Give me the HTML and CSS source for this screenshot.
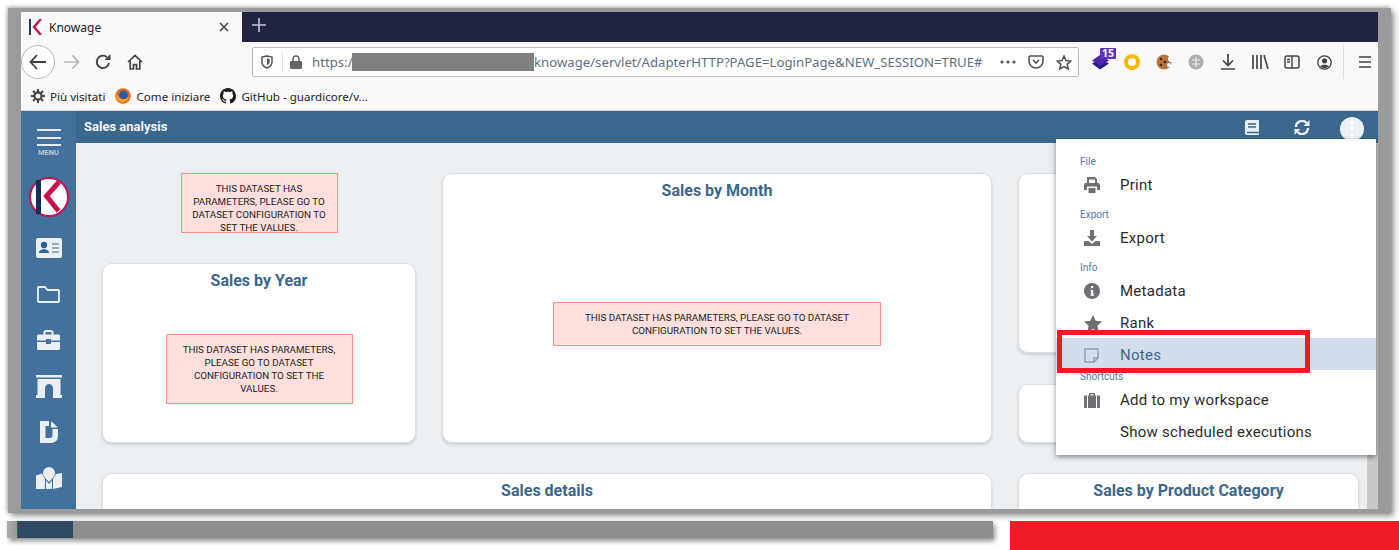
FILE: index.html
```html
<!DOCTYPE html>
<html lang="en">
<head>
  <meta charset="UTF-8" />
  <title>Knowage</title>
  <link rel="stylesheet" href="styles.css">
</head>
<body>
  <div class="frame">
    <div class="window">
      <div class="tabbar">
        <div class="tab">
          <svg class="favicon" width="13" height="16" viewBox="0 0 13 16"><rect x="0" y="0" width="2" height="16" fill="#1c3d63"/><path d="M12 0 L5 8 L12 16" fill="none" stroke="#c8104f" stroke-width="2.4"/></svg>
          <span class="tab-title">Knowage</span>
          <svg class="tab-close" width="10" height="10" viewBox="0 0 10 10"><path d="M1 1 L9 9 M9 1 L1 9" stroke="#444" stroke-width="1.5"/></svg>
        </div>
        <svg class="tab-new" width="14" height="14" viewBox="0 0 14 14"><path d="M7 0 V14 M0 7 H14" stroke="#c4c6d2" stroke-width="1.6"/></svg>
      </div>

      <div class="navbar">
        <div class="back">
          <svg width="18" height="16" viewBox="0 0 18 16"><path d="M8 1 L1.5 8 L8 15 M2 8 H17" fill="none" stroke="#3c3c3c" stroke-width="1.8"/></svg>
        </div>
        <div class="nav-btn">
          <svg width="17" height="16" viewBox="0 0 18 16"><path d="M10 1 L16.5 8 L10 15 M16 8 H1" fill="none" stroke="#b8b8b8" stroke-width="1.8"/></svg>
        </div>
        <div class="nav-btn">
          <svg width="16" height="16" viewBox="0 0 16 16"><path d="M14 9 A6.2 6.2 0 1 1 12 3.2" fill="none" stroke="#444" stroke-width="1.9"/><path d="M9.5 6 H15.5 V0 Z" fill="#444"/></svg>
        </div>
        <div class="nav-btn">
          <svg width="16" height="16" viewBox="0 0 16 16"><path d="M1 8 L8 1.5 L15 8 M3.2 7 V15 H6.5 V10.5 H9.5 V15 H12.8 V7" fill="none" stroke="#444" stroke-width="1.7"/></svg>
        </div>

        <div class="urlbar">
          <svg class="url-shield" width="12" height="14" viewBox="0 0 12 14"><path d="M1 2 L6 1 L11 2 V7 C11 10 8.5 12 6 13 C3.5 12 1 10 1 7 Z" fill="none" stroke="#555" stroke-width="1.5"/><path d="M6 3.5 L8.7 4 V7 C8.7 8.5 7.3 9.7 6 10.3 Z" fill="#555"/></svg>
          <span class="url-sep"></span>
          <svg class="url-lock" width="12" height="14" viewBox="0 0 12 14"><path d="M3 6 V4 A3 3 0 0 1 9 4 V6" fill="none" stroke="#666" stroke-width="1.6"/><rect x="0" y="6" width="12" height="8" rx="1.2" fill="#666"/></svg>
          <span class="url-text url-scheme">https:/</span>
          <span class="url-mask"></span>
          <span class="url-text url-path">knowage/servlet/AdapterHTTP?PAGE=LoginPage&amp;NEW_SESSION=TRUE#</span>
          <svg class="url-dots" width="16" height="4" viewBox="0 0 16 4"><circle cx="2" cy="2" r="1.6" fill="#555"/><circle cx="8" cy="2" r="1.6" fill="#555"/><circle cx="14" cy="2" r="1.6" fill="#555"/></svg>
          <svg class="url-pocket" width="16" height="14" viewBox="0 0 16 14"><path d="M2 1 H14 A1 1 0 0 1 15 2 V6 A7 7 0 0 1 1 6 V2 A1 1 0 0 1 2 1 Z" fill="none" stroke="#555" stroke-width="1.6"/><path d="M5 5 L8 8 L11 5" fill="none" stroke="#555" stroke-width="1.6"/></svg>
          <svg class="url-star" width="16" height="15" viewBox="0 0 16 15"><path d="M8 1.2 L10 5.6 L14.8 6.1 L11.2 9.3 L12.2 14 L8 11.6 L3.8 14 L4.8 9.3 L1.2 6.1 L6 5.6 Z" fill="none" stroke="#555" stroke-width="1.6"/></svg>
        </div>

        <div class="ext ext-stack">
          <svg width="17" height="16" viewBox="0 0 17 16"><path d="M0 9.5 L8 5 L17 9.5 L8 15.5 Z" fill="#2c1a86"/><path d="M0 6.5 L8 1 L17 6.5 L8 12 Z" fill="#4a25aa"/></svg>
          <span class="ext-badge">15</span>
        </div>
        <div class="ext"><span class="ring"></span></div>
        <div class="ext">
          <svg width="17" height="16" viewBox="0 0 17 16"><circle cx="8" cy="8" r="7.5" fill="#b8743e"/><circle cx="15" cy="5" r="3" fill="#f9f9fa"/><circle cx="13" cy="11" r="2" fill="#f9f9fa"/><circle cx="5" cy="5" r="1.3" fill="#4a2a18"/><circle cx="9" cy="8" r="1.3" fill="#4a2a18"/><circle cx="5" cy="11" r="1.3" fill="#4a2a18"/></svg>
        </div>
        <div class="ext">
          <svg width="16" height="16" viewBox="0 0 16 16"><circle cx="8" cy="8" r="7.5" fill="#aeaeae"/><path d="M8 3 V13 M4 6 H12 M4 10 H12" stroke="#eee" stroke-width="1.2"/></svg>
        </div>
        <div class="ext">
          <svg width="14" height="16" viewBox="0 0 14 16"><path d="M7 0 V11 M2 6.5 L7 11.5 L12 6.5 M0 15 H14" fill="none" stroke="#444" stroke-width="1.7"/></svg>
        </div>
        <div class="ext">
          <svg width="17" height="14" viewBox="0 0 17 14"><path d="M1 0 V14 M5 0 V14 M9 0 V14 M12 0 L16 14" fill="none" stroke="#444" stroke-width="1.7"/></svg>
        </div>
        <div class="ext">
          <svg width="16" height="14" viewBox="0 0 16 14"><rect x="1" y="1" width="14" height="12" rx="2" fill="none" stroke="#444" stroke-width="1.5"/><path d="M8 1 V13 M3 4.5 H6 M3 7 H6" stroke="#444" stroke-width="1.4"/></svg>
        </div>
        <div class="ext">
          <svg width="15" height="15" viewBox="0 0 15 15"><circle cx="7.5" cy="7.5" r="6.7" fill="none" stroke="#444" stroke-width="1.3"/><circle cx="7.5" cy="5.8" r="2.6" fill="#444"/><path d="M3 11.5 C4 9 11 9 12 11.5 L7.5 13.5 Z" fill="#444"/></svg>
        </div>
        <span class="nav-sep"></span>
        <div class="ext ext-menu">
          <svg width="12" height="12" viewBox="0 0 12 12"><path d="M0 1 H12 M0 6 H12 M0 11 H12" stroke="#444" stroke-width="1.6"/></svg>
        </div>
      </div>

      <div class="bookmarks">
        <span class="bookmark">
          <svg width="14" height="14" viewBox="0 0 14 14"><circle cx="7" cy="7" r="3.6" fill="none" stroke="#444" stroke-width="2.2"/><path d="M7 0 V3 M7 11 V14 M0 7 H3 M11 7 H14 M2 2 L4 4 M10 10 L12 12 M12 2 L10 4 M4 10 L2 12" stroke="#444" stroke-width="2"/></svg>
          Più visitati
        </span>
        <span class="bookmark">
          <svg width="16" height="16" viewBox="0 0 16 16"><circle cx="8" cy="8" r="7.8" fill="#e8642c"/><circle cx="8.5" cy="7" r="4.4" fill="#2c5aa8"/><path d="M1.5 5 C3 11 9 13.5 14.5 9 C13 14 6 16 2.5 12 C1 10 1 7 1.5 5 Z" fill="#f7a81e"/></svg>
          Come iniziare
        </span>
        <span class="bookmark">
          <svg width="16" height="16" viewBox="0 0 16 16"><path fill="#1b1f23" d="M8 0C3.58 0 0 3.58 0 8c0 3.54 2.29 6.53 5.47 7.59.4.07.55-.17.55-.38 0-.19-.01-.82-.01-1.49-2.01.37-2.53-.49-2.69-.94-.09-.23-.48-.94-.82-1.13-.28-.15-.68-.52-.01-.53.63-.01 1.08.58 1.23.82.72 1.21 1.87.87 2.33.66.07-.52.28-.87.51-1.07-1.78-.2-3.64-.89-3.64-3.95 0-.87.31-1.59.82-2.15-.08-.2-.36-1.02.08-2.12 0 0 .67-.21 2.2.82.64-.18 1.32-.27 2-.27s1.36.09 2 .27c1.53-1.04 2.2-.82 2.2-.82.44 1.1.16 1.92.08 2.12.51.56.82 1.27.82 2.15 0 3.07-1.87 3.75-3.65 3.95.29.25.54.73.54 1.48 0 1.07-.01 1.93-.01 2.2 0 .21.15.46.55.38A8.01 8.01 0 0016 8c0-4.42-3.58-8-8-8z"/></svg>
          GitHub - guardicore/v...
        </span>
      </div>

      <div class="app">
        <aside class="sidebar">
          <div class="hamburger">
            <span></span><span></span><span></span>
            <div class="hamburger-label">MENU</div>
          </div>
          <svg class="side-logo" width="40" height="40" viewBox="0 0 40 40">
            <circle cx="20" cy="20" r="19" fill="#fff" stroke="#c8104f" stroke-width="2"/>
            <rect x="7" y="3" width="5" height="34" fill="#12305a"/>
            <path d="M30 5 L17.5 19 L29.5 34" fill="none" stroke="#c8104f" stroke-width="5"/>
          </svg>
          <div class="side-item">
            <svg width="26" height="20" viewBox="0 0 26 20"><rect width="26" height="20" rx="2" fill="#ebeff2"/><circle cx="8" cy="7" r="3.2" fill="#2f628f"/><path d="M3 15 C3 10 13 10 13 15 Z" fill="#2f628f"/><path d="M16 6 H23 M16 10 H23 M16 14 H23" stroke="#6e92b2" stroke-width="1.6"/></svg>
          </div>
          <div class="side-item">
            <svg width="23" height="17" viewBox="0 0 23 17"><path d="M1 15 V2 A1 1 0 0 1 2 1 H8 L10.5 4 H21 A1 1 0 0 1 22 5 V15 A1 1 0 0 1 21 16 H2 A1 1 0 0 1 1 15 Z" fill="none" stroke="#ebeff2" stroke-width="1.8"/></svg>
          </div>
          <div class="side-item">
            <svg width="23" height="20" viewBox="0 0 23 20"><path d="M7.5 5 V2.5 A1.5 1.5 0 0 1 9 1 H14 A1.5 1.5 0 0 1 15.5 2.5 V5" fill="none" stroke="#ebeff2" stroke-width="2"/><path d="M0 6 A1.5 1.5 0 0 1 1.5 4.5 H21.5 A1.5 1.5 0 0 1 23 6 V10.5 H14 V9 H9 V10.5 H0 Z M0 12 H9 V14 H14 V12 H23 V18.5 A1.5 1.5 0 0 1 21.5 20 H1.5 A1.5 1.5 0 0 1 0 18.5 Z" fill="#ebeff2"/></svg>
          </div>
          <div class="side-item">
            <svg width="26" height="23" viewBox="0 0 26 23"><rect width="26" height="2.5" fill="#ebeff2"/><path d="M1.5 4 H24.5 V20 H26 V23 H17 V13.5 A4 4.5 0 0 0 9 13.5 V23 H0 V20 H1.5 Z" fill="#ebeff2"/></svg>
          </div>
          <div class="side-item">
            <svg width="18" height="22" viewBox="0 0 18 22"><path d="M0 0 H9 V5 H5.5 V17 H10 Q12.5 17 12.5 14 V8 H18 V14.5 Q18 22 10.5 22 H0 Z" fill="#ebeff2"/><path d="M11 0 L18 6.5 H11 Z" fill="#ebeff2"/></svg>
          </div>
          <div class="side-item">
            <svg width="26" height="22" viewBox="0 0 26 22"><path d="M13 0 A6 6 0 0 1 19 6 C19 9 15 13 13 15 C11 13 7 9 7 6 A6 6 0 0 1 13 0 Z" fill="#ebeff2"/><path d="M0 8.5 L6 6.5 L9 12 V22 L0 22 Z M17 12 L20 7 L26 6 V20 L17 22 Z M10 13.5 L13 17 L16 13.5 V22 H10 Z" fill="#ebeff2"/></svg>
          </div>
        </aside>

        <div class="main">
          <div class="topbar">
            <span class="topbar-title">Sales analysis</span>
            <div class="topbar-tools">
              <svg class="tool-book" width="14" height="15" viewBox="0 0 14 15"><path d="M2 0 H13 A1 1 0 0 1 14 1 V14 A1 1 0 0 1 13 15 H2 A2 2 0 0 1 0 13 V2 A2 2 0 0 1 2 0 Z" fill="#e8eef3"/><path d="M3 4 H11 M3 7 H11 M2 12.5 H14" stroke="#3b678c" stroke-width="1.3"/></svg>
              <svg class="tool-sync" width="16" height="15" viewBox="0 0 16 15"><path d="M2 7 A6 6 0 0 1 12.5 3" fill="none" stroke="#e8eef3" stroke-width="2.4"/><path d="M15.5 0 V6 H9.5 Z" fill="#e8eef3"/><path d="M14 8 A6 6 0 0 1 3.5 12" fill="none" stroke="#e8eef3" stroke-width="2.4"/><path d="M0.5 15 V9 H6.5 Z" fill="#e8eef3"/></svg>
              <span class="kebab"><i></i><i></i><i></i></span>
            </div>
          </div>

          <div class="content">
            <div class="board">
              <div class="col">
                <div class="alert alert-float">This dataset has parameters, please go to dataset configuration to set the values.</div>
                <section class="card card-year">
                  <h3>Sales by Year</h3>
                  <div class="alert alert-year">This dataset has parameters, please go to dataset configuration to set the values.</div>
                </section>
              </div>
              <div class="col">
                <section class="card card-month">
                  <h3>Sales by Month</h3>
                  <div class="alert alert-month">This dataset has parameters, please go to dataset configuration to set the values.</div>
                </section>
              </div>
              <div class="col">
                <section class="card card-right-a"></section>
                <section class="card card-right-b"></section>
              </div>
              <section class="card card-details"><h3>Sales details</h3></section>
              <section class="card card-category"><h3>Sales by Product Category</h3></section>
            </div>
            <div class="scrollbar"></div>
          </div>

          <div class="menu">
            <div class="menu-label">File</div>
            <div class="menu-item">
              <svg width="16" height="16" viewBox="0 0 16 16"><path fill="#6f6f75" d="M3 0 H11 L13 2 V6 H11 V2.5 H5 V6 H3 Z M1.5 6 H14.5 A1.5 1.5 0 0 1 16 7.5 V13 H13 V9.5 H3 V13 H0 V7.5 A1.5 1.5 0 0 1 1.5 6 Z M4.5 11 H11.5 V16 H4.5 Z"/></svg>
              Print
            </div>
            <div class="menu-label">Export</div>
            <div class="menu-item">
              <svg width="16" height="16" viewBox="0 0 16 16"><path fill="#6f6f75" d="M6 0 H10 V6 H13 L8 11.5 L3 6 H6 Z M0 11 H4.5 L8 14 L11.5 11 H16 V16 H0 Z"/></svg>
              Export
            </div>
            <div class="menu-label">Info</div>
            <div class="menu-item">
              <svg width="16" height="16" viewBox="0 0 16 16"><circle cx="8" cy="8" r="8" fill="#6f6f75"/><rect x="7" y="3" width="2.2" height="2.2" fill="#fff"/><path d="M6.5 7 H9.2 V11.5 H10 V12.8 H6.5 V11.5 H7 V8.3 H6.5 Z" fill="#fff"/></svg>
              Metadata
            </div>
            <div class="menu-item">
              <svg width="18" height="17" viewBox="0 0 18 17"><path fill="#6f6f75" d="M9 0 L11.7 5.7 L18 6.5 L13.4 10.8 L14.6 17 L9 14 L3.4 17 L4.6 10.8 L0 6.5 L6.3 5.7 Z"/></svg>
              Rank
            </div>
            <div class="menu-item menu-item-active">
              <svg width="15" height="15" viewBox="0 0 15 15"><path d="M1 1 H14 V10 L10 14 H1 Z M14 10 H10 V14" fill="none" stroke="#8fa1b3" stroke-width="1.5"/></svg>
              Notes
            </div>
            <div class="menu-label menu-label-tight">Shortcuts</div>
            <div class="menu-item">
              <svg width="16" height="15" viewBox="0 0 16 15"><path fill="#6f6f75" d="M5 0 H11 V2.5 H16 V15 H0 V2.5 H5 Z M6.5 1.3 V2.5 H9.5 V1.3 Z"/><path d="M3.5 2.5 V15 M12.5 2.5 V15" stroke="#fff" stroke-width="1"/></svg>
              Add to my workspace
            </div>
            <div class="menu-item">Show scheduled executions</div>
          </div>

          <div class="highlight"></div>
        </div>
      </div>
    </div>
  </div>

  <div class="under">
    <div class="under-bar"><span class="under-dark"></span></div>
    <div class="under-red"></div>
  </div>
</body>
</html>
```

FILE: styles.css
```css
html, body {
  margin: 0;
  height: 550px;
  overflow: hidden;
}
body {
  background: #fff;
  font-family: "Roboto", sans-serif;
}
svg {
  display: block;
  flex: none;
}

.frame {
  margin: 8px 7px 0 8px;
  width: 1383px;
  height: 505px;
  box-sizing: border-box;
  padding: 4px 13px 4px 13px;
  background: #9b9b9b;
  box-shadow: 3px 3px 6px rgba(0,0,0,0.4), -1px -1px 4px rgba(0,0,0,0.3);
}
.window {
  height: 497px;
  display: flex;
  flex-direction: column;
  overflow: hidden;
  background: #f9f9fa;
}

/* browser chrome */
.tabbar {
  height: 30px;
  flex: none;
  display: flex;
  background: #202342;
}
.tab {
  width: 221px;
  display: flex;
  align-items: center;
  padding-left: 8px;
  box-sizing: border-box;
  background: #f9f9fa;
  font-family: "Noto Sans", sans-serif;
  font-size: 12px;
  color: #222;
}
.tab-title {
  margin-left: 7px;
  flex: 1;
}
.tab-close {
  margin-right: 13px;
}
.tab-new {
  margin: 6px 0 0 10px;
}
.navbar {
  height: 38px;
  flex: none;
  display: flex;
  align-items: center;
  box-sizing: border-box;
  padding-top: 2px;
}
.back {
  width: 32px;
  height: 32px;
  display: flex;
  align-items: center;
  justify-content: center;
  border: 1px solid #b9b9b9;
  border-radius: 50%;
  background: #fff;
  flex: none;
}
.nav-btn {
  width: 32px;
  display: flex;
  justify-content: center;
  flex: none;
}
.urlbar {
  width: 825px;
  height: 28px;
  margin-left: 101px;
  display: flex;
  align-items: center;
  flex: none;
  border: 1px solid #bcbcbc;
  border-radius: 2px;
  background: #fff;
  font-family: "Noto Sans", sans-serif;
  font-size: 13.2px;
  color: #5f6f80;
}
.url-shield {
  margin-left: 8px;
}
.url-sep {
  width: 1px;
  height: 22px;
  margin-left: 9px;
  background: #e4e4e4;
}
.url-lock {
  margin: 0 10px 0 7px;
}
.url-text {
  white-space: nowrap;
}
.url-scheme {
  width: 40px;
  flex: none;
}
.url-mask {
  width: 182px;
  height: 18px;
  background: #808080;
  flex: none;
}
.url-path {
  width: 449px;
  flex: none;
  overflow: hidden;
}
.url-dots {
  margin-left: 17px;
}
.url-pocket {
  margin-left: 12px;
}
.url-star {
  margin-left: 12px;
}
.ext {
  width: 32px;
  display: flex;
  justify-content: center;
  flex: none;
  position: relative;
}
.ext-stack {
  margin-left: 5px;
}
.ext-badge {
  position: absolute;
  top: -6px;
  left: 16px;
  padding: 0 2px;
  background: #5b2fc4;
  color: #fff;
  font-family: "Noto Sans", sans-serif;
  font-size: 10.5px;
  font-weight: 700;
  line-height: 11px;
  border-radius: 1px;
}
.ring {
  width: 16px;
  height: 16px;
  box-sizing: border-box;
  border: 4px solid #fdb900;
  border-radius: 50%;
}
.nav-sep {
  width: 1px;
  height: 34px;
  margin-left: 3px;
  background: #dcdcdc;
  flex: none;
}
.ext-menu {
  width: 42px;
}
.bookmarks {
  height: 31px;
  flex: none;
  display: flex;
  align-items: center;
  box-sizing: border-box;
  padding: 2px 0 0 10px;
  border-bottom: 1px solid #d4d4d4;
  font-family: "Noto Sans", sans-serif;
  font-size: 11.6px;
  color: #222;
}
.bookmark {
  display: flex;
  align-items: center;
  gap: 5px;
  margin-right: 10px;
}

/* knowage app */
.app {
  flex: 1;
  min-height: 0;
  display: flex;
}
.sidebar {
  width: 55px;
  flex: none;
  display: flex;
  flex-direction: column;
  align-items: center;
  background: #41719c;
}
.hamburger {
  width: 24px;
  padding-top: 18px;
  display: flex;
  flex-direction: column;
  align-items: center;
  gap: 5.5px;
}
.hamburger span {
  display: block;
  width: 24px;
  height: 2px;
  background: #e4eaf0;
}
.hamburger-label {
  margin-top: -2.5px;
  font-size: 7.5px;
  font-weight: 700;
  line-height: 8px;
  color: #b9cad9;
}
.side-logo {
  margin-top: 20px;
}
.side-item {
  height: 46px;
  width: 100%;
  display: flex;
  align-items: center;
  justify-content: center;
}
.side-logo + .side-item {
  margin-top: 8px;
}
.main {
  flex: 1;
  min-width: 0;
  display: flex;
  flex-direction: column;
  position: relative;
}
.topbar {
  height: 32px;
  flex: none;
  display: flex;
  align-items: center;
  justify-content: space-between;
  padding: 0 14px 0 8px;
  background: #3b678c;
}
.topbar-title {
  font-size: 13px;
  font-weight: 700;
  color: #f2f5f8;
  margin-top: -1px;
}
.topbar-tools {
  display: flex;
  align-items: center;
  margin-top: 1px;
}
.tool-sync {
  margin-left: 35px;
}
.kebab {
  width: 24px;
  height: 24px;
  margin: 3px 0 0 30px;
  display: flex;
  flex-direction: column;
  align-items: center;
  justify-content: center;
  gap: 2px;
  border-radius: 50%;
  background: #eef1f4;
}
.kebab i {
  width: 4px;
  height: 4px;
  border-radius: 50%;
  background: #fff;
}
.content {
  flex: 1;
  min-height: 0;
  display: flex;
  background: #ebeff2;
  overflow: hidden;
}
.board {
  flex: 1;
  display: grid;
  grid-template-columns: 314px 550px 341px;
  grid-template-rows: 270px 60px;
  column-gap: 26px;
  row-gap: 30px;
  padding: 30px 0 0 26px;
}
.col {
  display: flex;
  flex-direction: column;
  align-items: center;
}
.card {
  box-sizing: border-box;
  width: 100%;
  border: 1px solid #dcdfe2;
  border-radius: 10px;
  background: #fff;
  box-shadow: 0 2px 3px rgba(0,0,0,0.13);
  display: flex;
  flex-direction: column;
  align-items: center;
}
.card h3 {
  margin: 7px 0 0;
  font-size: 16px;
  font-weight: 700;
  line-height: 19px;
  color: #3b678c;
}
.card-year {
  height: 180px;
  margin-top: 30px;
}
.card-month {
  height: 270px;
}
.card-right-a {
  height: 180px;
}
.card-right-b {
  height: 59px;
  margin-top: 31px;
}
.card-details {
  grid-column: 1 / 3;
  height: 80px;
}
.card-category {
  height: 80px;
}
.alert {
  box-sizing: border-box;
  border: 1px solid #f6928a;
  background: #fde0de;
  color: #222;
  font-size: 9.8px;
  line-height: 13px;
  text-align: center;
  text-transform: uppercase;
}
.alert-float {
  width: 157px;
  height: 60px;
  padding: 8px 8px 0;
  overflow: hidden;
}
.alert-year {
  width: 187px;
  height: 70px;
  margin-top: 44px;
  padding: 8px 14px 0;
}
.alert-month {
  width: 328px;
  height: 44px;
  margin-top: 102px;
  padding: 8px 24px 0;
}
.scrollbar {
  width: 11px;
  flex: none;
  background: #c9c9c9;
}

/* dropdown and annotation */
.menu {
  position: absolute;
  left: 980px;
  top: 28px;
  width: 320px;
  box-sizing: border-box;
  padding: 14px 0 8px;
  background: #fff;
  box-shadow: 0 2px 5px rgba(0,0,0,0.45);
}
.menu-label {
  height: 15px;
  margin-top: 6px;
  padding-left: 24px;
  font-size: 10px;
  line-height: 17px;
  color: #4a7ba6;
}
.menu-label:first-child {
  margin-top: 0;
}
.menu-label-tight {
  height: 13px;
  margin-top: 0;
  line-height: 13px;
}
.menu-item {
  height: 32px;
  display: flex;
  align-items: center;
  box-sizing: border-box;
  padding: 2px 0 0 64px;
  position: relative;
  font-size: 15px;
  color: #2b2b2b;
  letter-spacing: 0.26px;
}
.menu-item svg {
  position: absolute;
  left: 28px;
}
.menu-item-active {
  background: #d3deea;
  color: #3b678c;
}
.highlight {
  position: absolute;
  left: 981px;
  top: 219px;
  width: 253px;
  height: 43px;
  box-sizing: border-box;
  border: 5px solid #ed1c24;
}

/* strip below the screenshot */
.under {
  display: flex;
  align-items: flex-start;
  margin-top: 8px;
}
.under-bar {
  width: 986px;
  height: 17px;
  margin-left: 7px;
  padding-left: 10px;
  box-sizing: border-box;
  background: linear-gradient(to right, #aaa, #999 10px, #8e8e8e 10px);
  box-shadow: 2px 3px 5px rgba(0,0,0,0.45);
}
.under-dark {
  display: block;
  width: 56px;
  height: 17px;
  box-sizing: border-box;
  border-left: 1px solid #a83040;
  background: #2f4a63;
}
.under-red {
  width: 389px;
  height: 29px;
  margin-left: 17px;
  background: #ed1c24;
}
```
